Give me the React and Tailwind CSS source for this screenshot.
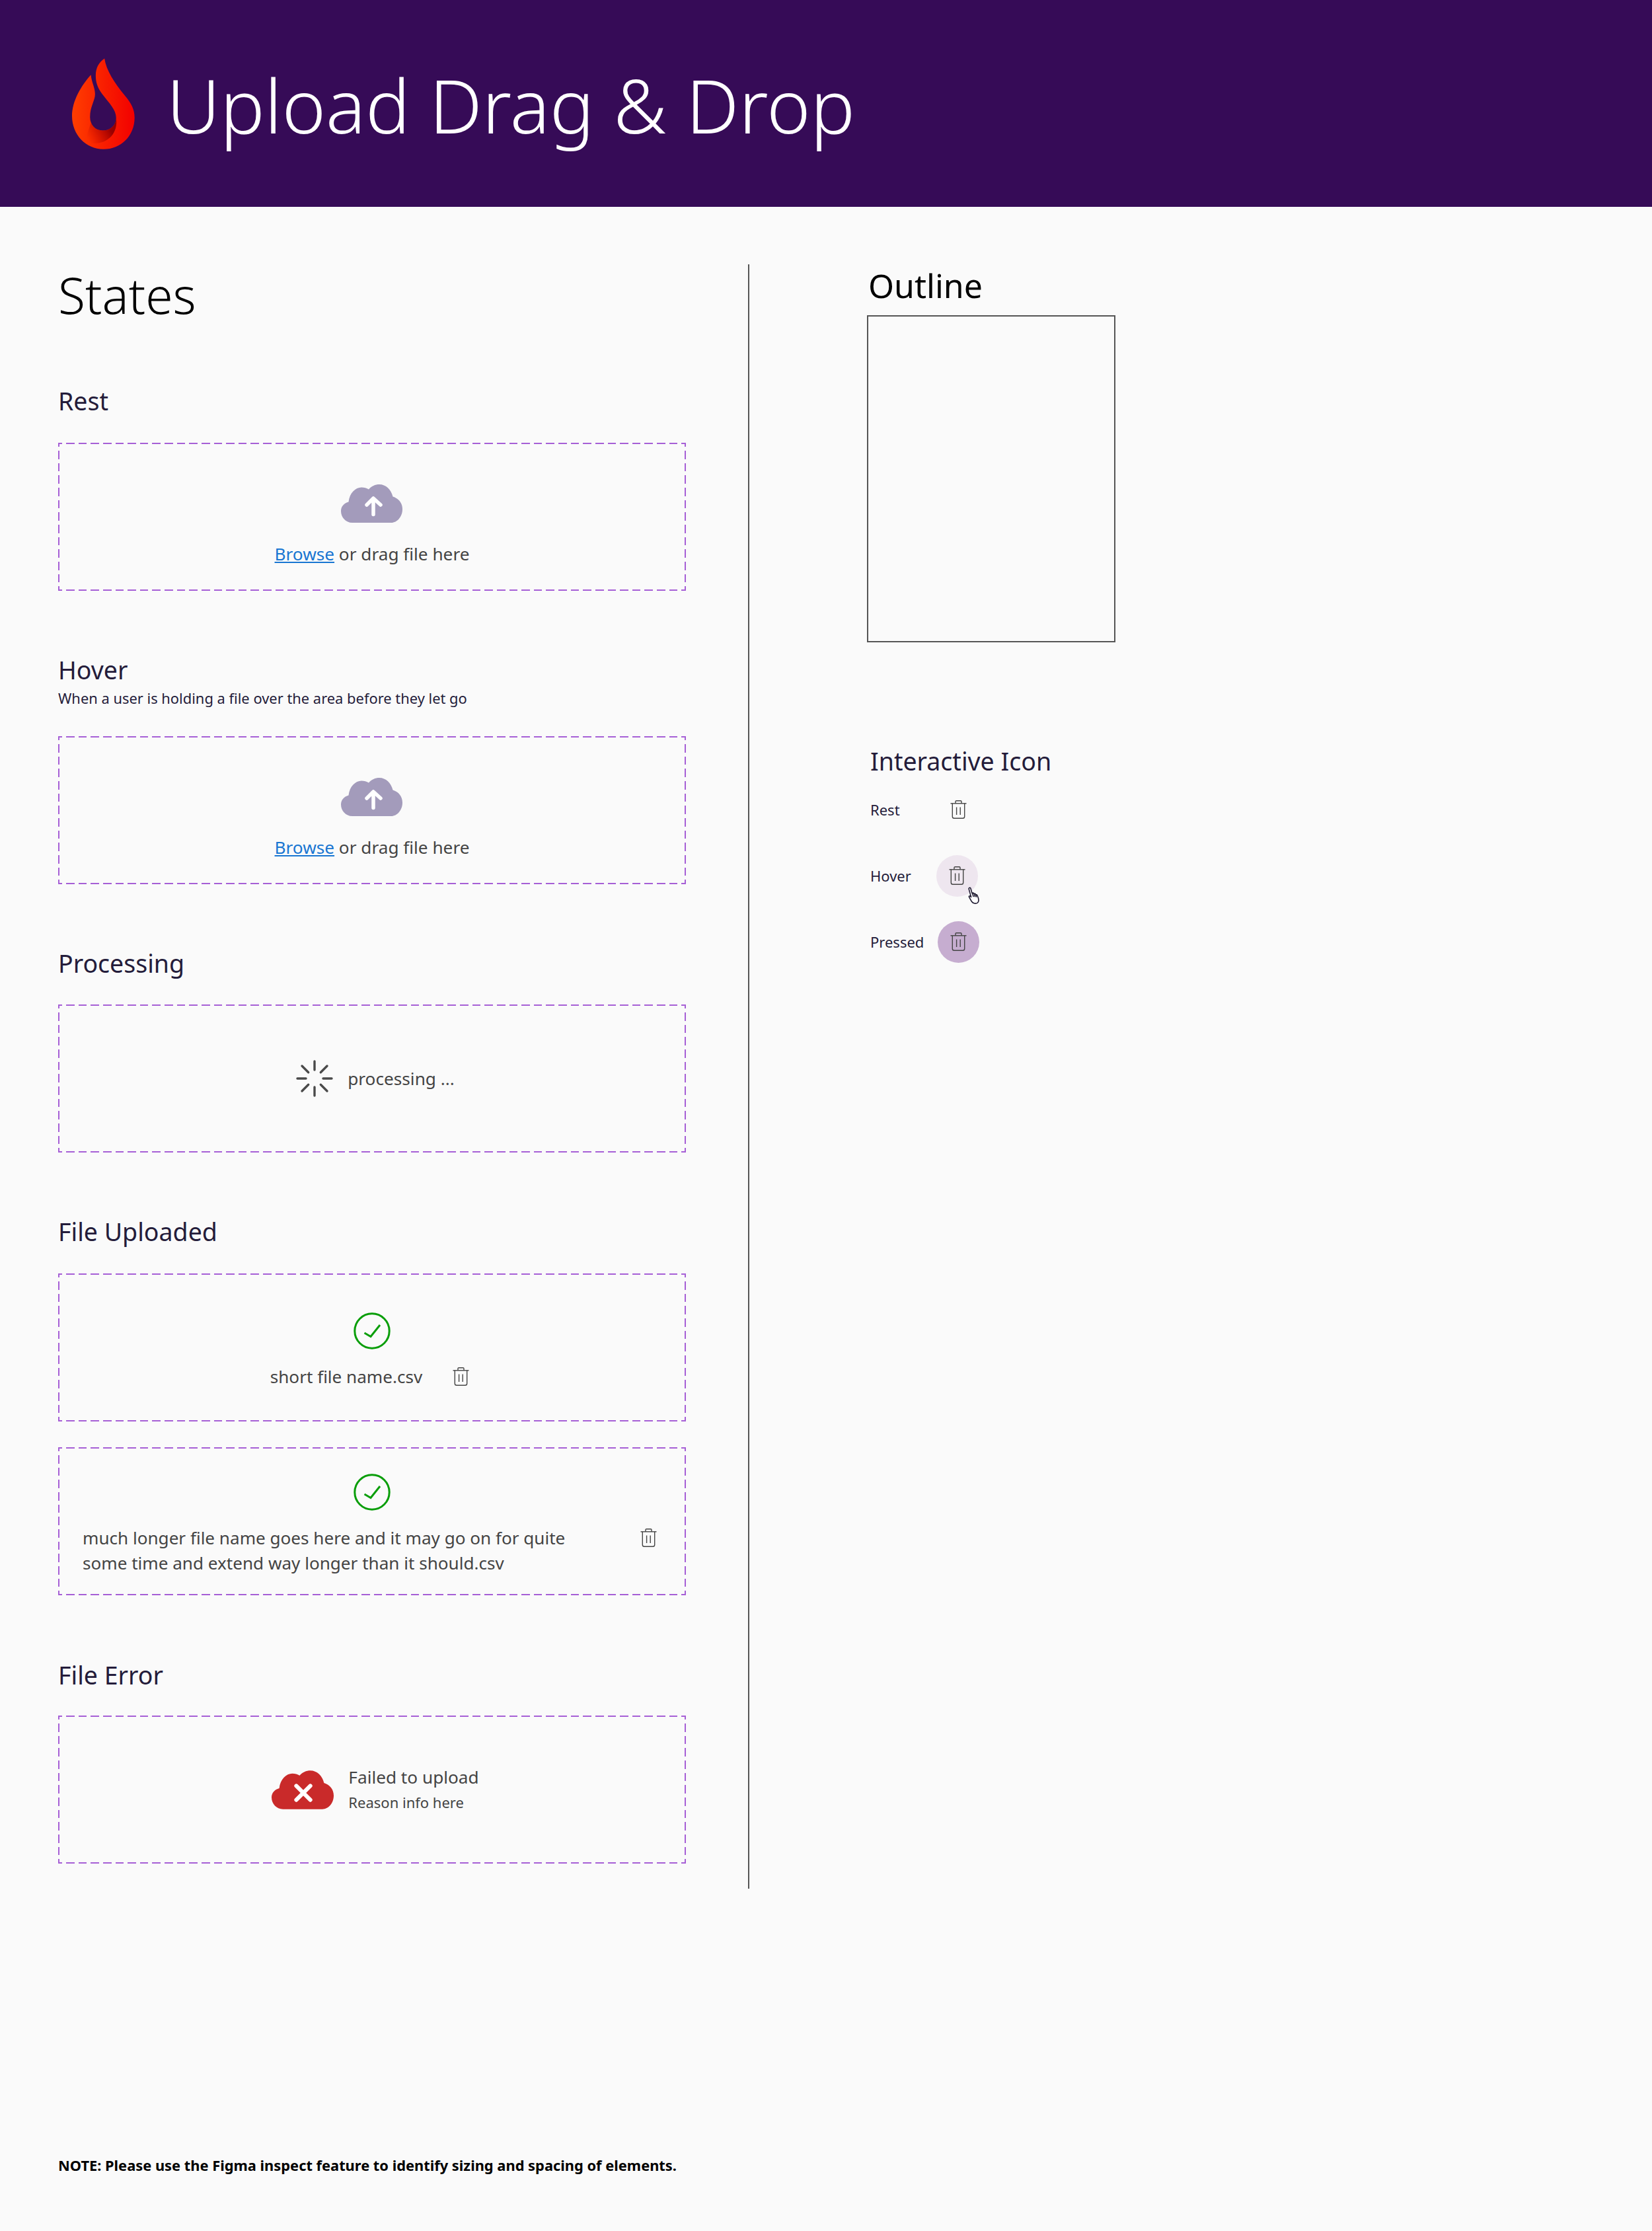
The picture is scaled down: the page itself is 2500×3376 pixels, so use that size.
const Flame = () => (
    <svg viewBox="57 52 286 414" className="w-[95px] h-[138px] shrink-0">
        <defs>
            <linearGradient id="flameFill" x1="0" y1="0" x2="1" y2="0">
                <stop offset="0" stopColor="#ff3d00" />
                <stop offset="1" stopColor="#f20000" />
            </linearGradient>
            <linearGradient id="flameShade" x1="130" y1="420" x2="262" y2="340" gradientUnits="userSpaceOnUse">
                <stop offset="0" stopColor="#c81000" stopOpacity="0" />
                <stop offset="0.7" stopColor="#9c0000" />
                <stop offset="1" stopColor="#8a0000" />
            </linearGradient>
        </defs>
        <path
            fill="url(#flameFill)"
            d="M205 53C212 105 250 165 298 222C328 258 342 285 342 322C342 405 280 466 200 466C120 466 57 400 57 315C57 245 100 175 143 127C147 165 162 185 162 215C162 245 139 270 139 320C139 355 163 381 197 381C232 381 258 358 258 323C258 285 225 255 195 215C172 185 165 160 165 130C165 95 180 70 205 53Z"
        />
        <path
            fill="url(#flameShade)"
            d="M258 323C258 358 232 381 197 381C172 381 152 367 144 345C130 380 122 415 118 433C130 438 142 440 156 440C220 440 268 395 258 323Z"
        />
    </svg>
);

const CloudShape = "M17 58C7.5 58 0 50 0 40.5C0 33.5 4.5 28.5 11.5 26.5C13 13 22 4.5 31 4.5C35 4.5 39 5.5 42 7.5C46 2.5 52 0 58 0C68 0 76 8 78.5 18.5C87 21 93 28 93 37.5C93 49 85 58 76 58Z";

const CloudUpload = () => (
    <svg viewBox="0 0 93 58" className="w-[93px] h-[58px] shrink-0 -translate-x-px">
        <path d={CloudShape} fill="#a39bbb" />
        <path d="M49 45.5V21.5M39 31L49 21L60 31" fill="none" stroke="#fff" strokeWidth="5.5" strokeLinecap="round" strokeLinejoin="round" />
    </svg>
);

const CloudError = () => (
    <svg viewBox="0 0 93 58" className="w-[94px] h-[59px] shrink-0">
        <path d={CloudShape} fill="#c92a2a" />
        <path d="M37 23L58 44M58 23L37 44" fill="none" stroke="#fff" strokeWidth="6" strokeLinecap="round" />
    </svg>
);

const Trash = () => (
    <svg viewBox="0 0 25 28" className="w-[25px] h-[28px] shrink-0" fill="none" stroke="#444444" strokeWidth="1.4">
        <path d="M0.5 4.8H24.5" />
        <path d="M8 4.8V2C8 1.2 8.6 0.7 9.3 0.7H15.7C16.4 0.7 17 1.2 17 2V4.8" />
        <path d="M3.3 4.8V24.5C3.3 26.2 4.4 27.3 6 27.3H19C20.6 27.3 21.7 26.2 21.7 24.5V4.8" />
        <path d="M9.6 10.5V22M15.2 10.5V22" />
    </svg>
);

const Check = () => (
    <svg viewBox="0 0 56 56" className="w-14 h-14 shrink-0" fill="none" stroke="#0a9e0a">
        <circle cx="28" cy="28" r="26.2" strokeWidth="3" />
        <path d="M16.5 31L26 36.5L40 19" strokeWidth="3" />
    </svg>
);

const Spinner = () => (
    <svg viewBox="0 0 56 56" className="w-14 h-14 shrink-0" stroke="#4a4a4a" strokeWidth="3.4" strokeLinecap="round">
        <path d="M28 2V15M28 41V54M2 28H15M41 28H54M9 9L18.7 18.7M37.3 37.3L47 47M47 9L37.3 18.7M18.7 37.3L9 47" />
    </svg>
);

const Hand = () => (
    <svg viewBox="0 0 18 26" className="absolute left-[47px] top-[48px] w-[18px] h-[26px]" fill="#fff" stroke="#1e1a30" strokeWidth="1.6" strokeLinejoin="round" strokeLinecap="round">
        <path d="M2.6 1.7C3.5 0.9 4.5 1.2 4.9 2.2L7 9.6L7.6 9.5C8.3 8.8 9.2 9 9.7 9.9L10.3 10.6C10.9 10 11.9 10.2 12.3 11.2L12.9 12C13.6 11.6 14.5 12 15 13C16.4 16 17.4 19 16.8 21.6C16.1 24.3 13.4 25.4 10.8 25C8.2 24.6 6.8 23 5.6 20.8L2.6 15.4C2 14.4 3 13.2 4.1 14L5.6 15.4L2.3 3.6C2.1 2.9 2.2 2.2 2.6 1.7Z" />
        <path d="M7.6 9.5L9 14.5M10.3 10.6L11.4 14.6M12.9 12L13.6 15" />
    </svg>
);

const Heading = ({ children, className = "" }) => (
    <h3 className={`text-[37.5px] leading-[50px] text-[#241c3a] ${className}`}>{children}</h3>
);

// dashes are longer than what border-dashed gives, so the four edges are gradients
const DropBox = ({ children, className = "" }) => (
    <div className={`w-[950px] h-[224px] [background:repeating-linear-gradient(90deg,#a65fd6_0_6px,transparent_6px_12px,#a65fd6_12px_18.627px)_0_0/100%_2px_no-repeat,repeating-linear-gradient(90deg,#a65fd6_0_6px,transparent_6px_12px,#a65fd6_12px_18.627px)_0_100%/100%_2px_no-repeat,repeating-linear-gradient(180deg,#a65fd6_0_6px,transparent_6px_12px,#a65fd6_12px_18.667px)_0_0/2px_100%_no-repeat,repeating-linear-gradient(180deg,#a65fd6_0_6px,transparent_6px_12px,#a65fd6_12px_18.667px)_100%_0/2px_100%_no-repeat] ${className}`}>{children}</div>
);

const BrowseBox = () => (
    <DropBox className="flex flex-col items-center pt-[63px]">
        <CloudUpload />
        <p className="mt-[28px] text-[26.2px] leading-[38px] text-[#444444]">
            <a href="#" className="text-[#1976d2] underline">Browse</a> or drag file here
        </p>
    </DropBox>
);

const IconRow = ({ label, bg = "", offset = "", hand = false }) => (
    <div className="flex items-center h-[64px]">
        <span className="w-[102px] text-[22px] text-[#241c3a]">{label}</span>
        <div className={`relative flex items-center justify-center w-[63px] h-[63px] rounded-full ${bg} ${offset}`}>
            <Trash />
            {hand && <Hand />}
        </div>
    </div>
);

export default function App() {
    return (
        <div className="flex flex-col h-[3376px] bg-[#fafafa] font-['Noto_Sans',sans-serif]">
            <header className="flex items-center h-[313px] shrink-0 pl-[109px] bg-[#360b57]">
                <Flame />
                <h1 className="ml-[48px] pt-[5px] text-[112.4px] leading-none font-light text-white">Upload Drag &amp; Drop</h1>
            </header>

            <main className="flex pt-[87px]">
                <section className="w-[1132px] shrink-0 pl-[88px]">
                    <h2 className="text-[75px] leading-[92px] font-light text-black">States</h2>

                    <Heading className="mt-[90px] mb-[38px]">Rest</Heading>
                    <BrowseBox />

                    <Heading className="mt-[95px]">Hover</Heading>
                    <p className="mt-[3px] mb-[42px] text-[21.9px] leading-[30px] text-[#241c3a]">When a user is holding a file over the area before they let go</p>
                    <BrowseBox />

                    <Heading className="mt-[95px] mb-[37px]">Processing</Heading>
                    <DropBox className="flex items-center justify-center gap-[22px] pl-[10px]">
                        <Spinner />
                        <span className="text-[26.2px] leading-[38px] text-[#444444]">processing ...</span>
                    </DropBox>

                    <Heading className="mt-[95px] mb-[38px]">File Uploaded</Heading>
                    <DropBox className="flex flex-col items-center pt-[59px]">
                        <Check />
                        <div className="flex items-center gap-[38px] mt-[21px]">
                            <span className="text-[26.1px] leading-[38px] text-[#444444]">short file name.csv</span>
                            <button className="flex items-center justify-center w-10 h-10"><Trash /></button>
                        </div>
                    </DropBox>
                    <DropBox className="flex flex-col items-center mt-[39px] pt-[40px] px-[37px]">
                        <Check />
                        <div className="flex justify-between w-full mt-[22px]">
                            <span className="w-[800px] text-[26.1px] leading-[38px] text-[#444444]">much longer file name goes here and it may go on for quite some time and extend way longer than it should.csv</span>
                            <button className="flex justify-center w-10 h-10 pt-[5px]"><Trash /></button>
                        </div>
                    </DropBox>

                    <Heading className="mt-[96px] mb-[36px]">File Error</Heading>
                    <DropBox className="flex items-center justify-center gap-[22px] pl-[10px]">
                        <CloudError />
                        <div>
                            <p className="text-[26.2px] leading-[38px] text-[#444444]">Failed to upload</p>
                            <p className="text-[22px] leading-[38px] text-[#444444]">Reason info here</p>
                        </div>
                    </DropBox>
                </section>

                <div className="w-[2px] h-[2458px] shrink-0 bg-[#555555]" />

                <section className="pl-[178px]">
                    <h2 className="pl-[2px] text-[50px] leading-[64px] text-black">Outline</h2>
                    <div className="w-[376px] h-[495px] mt-[13px] border-2 border-[#555555]" />

                    <div className="mt-[155px] pl-[5px]">
                        <Heading>Interactive Icon</Heading>
                        <div className="flex flex-col gap-[36px] mt-[16px]">
                            <IconRow label="Rest" />
                            <IconRow label="Hover" bg="bg-[#eee6ef]" offset="-ml-[2px]" hand />
                            <IconRow label="Pressed" bg="bg-[#c6add0]" />
                        </div>
                    </div>
                </section>
            </main>

            <p className="mt-auto mb-[82px] pl-[88px] text-[21.85px] font-bold text-black">NOTE: Please use the Figma inspect feature to identify sizing and spacing of elements.</p>
        </div>
    );
}
